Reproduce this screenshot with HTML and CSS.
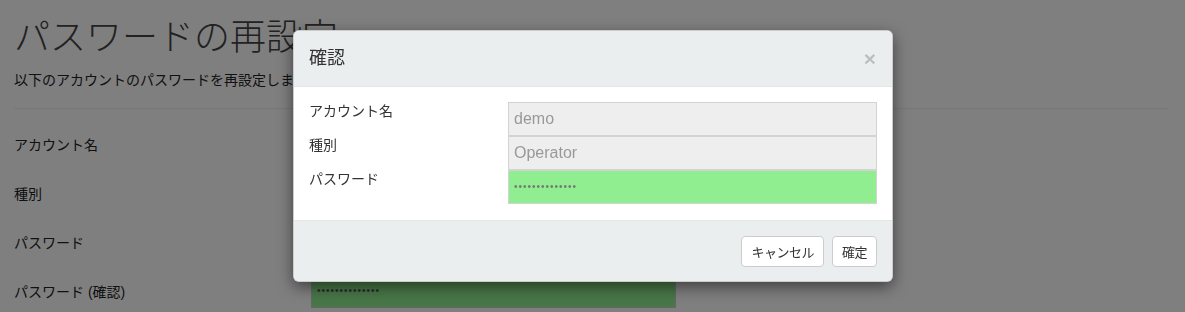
FILE: index.html
```html
<!DOCTYPE html>
<html lang="ja">
<head>
    <meta charset="UTF-8">
    <meta name="viewport" content="width=device-width, initial-scale=1.0">
    <title>パスワードの再設定</title>
    <link rel="stylesheet" href="styles.css">
</head>
<body>
    <div class="page">
        <h1 class="page-title">パスワードの再設定</h1>
        <p class="lead">以下のアカウントのパスワードを再設定します。</p>
        <hr class="divider">
        <form class="reset-form">
            <div class="form-row">
                <label>アカウント名</label>
                <div class="static">demo</div>
            </div>
            <div class="form-row">
                <label>種別</label>
                <div class="static">Operator</div>
            </div>
            <div class="form-row">
                <label>パスワード</label>
                <div class="field ok">••••••••••••••</div>
            </div>
            <div class="form-row">
                <label>パスワード (確認)</label>
                <div class="field ok">••••••••••••••</div>
            </div>
        </form>
    </div>

    <div class="backdrop"></div>

    <div class="modal">
        <div class="modal-header">
            <h4 class="modal-title">確認</h4>
            <button class="close" type="button">×</button>
        </div>
        <div class="modal-body">
            <div class="confirm-grid">
                <div class="confirm-labels">
                    <div>アカウント名</div>
                    <div>種別</div>
                    <div>パスワード</div>
                </div>
                <div class="confirm-inputs">
                    <div class="readonly">demo</div>
                    <div class="readonly">Operator</div>
                    <div class="readonly ok dots">••••••••••••••</div>
                </div>
            </div>
        </div>
        <div class="modal-footer">
            <button class="btn" type="button">キャンセル</button>
            <button class="btn" type="button">確定</button>
        </div>
    </div>
</body>
</html>
```

FILE: styles.css
```css
body {
    margin: 0;
    font-family: "Liberation Sans", "Noto Sans CJK JP", sans-serif;
    font-size: 14px;
    color: #333;
    background: #fff;
    height: 312px;
    overflow: hidden;
}

.page {
    padding: 0 17px 0 14px;
}

.page-title {
    margin: 14px 0 0;
    font-size: 36px;
    font-weight: 300;
    line-height: 48px;
    color: #444;
}

.lead {
    margin: 8px 0 0;
    line-height: 20px;
    color: #222;
}

.divider {
    margin: 18px 0 0;
    border: 0;
    border-top: 1px solid #eee;
}

.reset-form {
    padding-top: 18px;
    color: #222;
}

.form-row {
    display: grid;
    grid-template-columns: 297px 365px;
    align-items: center;
    height: 34px;
    margin-bottom: 15px;
}

.field {
    height: 34px;
    box-sizing: border-box;
    padding: 0 5px;
    line-height: 32px;
    border: 1px solid #ccc;
    font-size: 10px;
    letter-spacing: 1px;
    color: #555;
}

.ok {
    background: #90ee90;
}

.backdrop {
    position: fixed;
    inset: 0;
    background: rgba(0, 0, 0, 0.5);
}

.modal {
    position: absolute;
    top: 30px;
    left: 293px;
    width: 598px;
    background: #fff;
    border: 1px solid rgba(0, 0, 0, 0.2);
    border-radius: 6px;
    box-shadow: 0 5px 15px rgba(0, 0, 0, 0.5);
    overflow: hidden;
}

.modal-header {
    display: flex;
    justify-content: space-between;
    align-items: center;
    padding: 15px;
    background: #ebeeef;
    border-bottom: 1px solid #e5e5e5;
}

.modal-title {
    margin: 0;
    font-size: 18px;
    font-weight: normal;
    line-height: 25px;
}

.close {
    padding: 0;
    border: 0;
    background: none;
    font-family: "Liberation Sans", sans-serif;
    font-size: 21px;
    font-weight: bold;
    line-height: 1;
    color: #000;
    opacity: 0.2;
    margin-right: 1px;
}

.modal-body {
    padding: 15px 15px 16px;
}

.confirm-grid {
    display: grid;
    grid-template-columns: 199px 1fr;
}

.confirm-labels div {
    height: 34px;
    line-height: 18px;
    font-size: 14px;
}

.readonly {
    height: 34px;
    box-sizing: border-box;
    padding: 0 5px;
    line-height: 32px;
    border: 1px solid #d3d3d3;
    background: #eee;
    color: #999;
    font-size: 16px;
}

.readonly.ok {
    background: #90ee90;
}

.dots {
    font-size: 10px;
    letter-spacing: 1px;
    color: #777;
}

.modal-footer {
    display: flex;
    justify-content: flex-end;
    gap: 8px;
    padding: 15px 15px 14px;
    background: #ebeeef;
    border-top: 1px solid #e5e5e5;
}

.btn {
    height: 31px;
    padding: 0 9px;
    border: 1px solid #ccc;
    border-radius: 4px;
    background: #fff;
    font-family: "Liberation Sans", "Noto Sans CJK JP", sans-serif;
    font-size: 13px;
    letter-spacing: -0.5px;
    color: #333;
}
```
